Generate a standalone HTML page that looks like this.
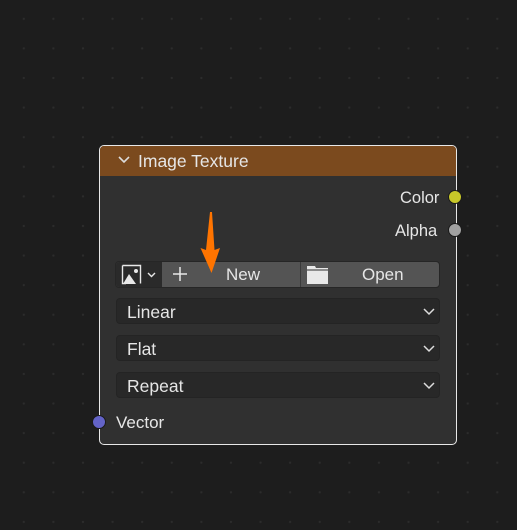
<!DOCTYPE html>
<html><head><style>
body{margin:0;width:517px;height:530px;overflow:hidden;background-color:#1d1d1d;
background-image:radial-gradient(circle,#2c2c2c 1px,transparent 1.3px);background-size:29.6px 29.6px;background-position:9px 4px;
font-family:"Liberation Sans","DejaVu Sans",sans-serif;color:#e6e6e6;font-size:16px;position:relative}
.node{position:absolute;left:99px;top:145px;width:356px;height:298px;border:1px solid #e8e8e8;border-radius:5px;background:#303030;overflow:hidden}
.hdr{height:30px;background:#7b4a1e;position:relative}
.hdr span{position:absolute;left:38px;top:5px;font-size:17.5px}
.abs{position:absolute}
.sock{position:absolute;width:12px;height:12px;border-radius:50%;border:1px solid #1a1a1a}
.dd{position:absolute;left:116px;width:324px;height:26px;background:#282828;border:1px solid #242424;border-radius:4px;box-sizing:border-box}
.dd span{position:absolute;left:10px;top:3px;font-size:17.5px}
.dd svg{position:absolute;right:4px;top:9px}
</style></head><body>
<div class="node"><div class="hdr">
<svg class="abs" style="left:17px;top:9px" width="14" height="10"><path d="M2 2 L7 7 L12 2" stroke="#ddd" stroke-width="1.6" fill="none"/></svg>
<span>Image Texture</span></div></div>
<div class="abs" style="left:400px;top:189px;font-size:16.5px">Color</div>
<div class="abs" style="left:395px;top:222px;font-size:16.5px">Alpha</div>
<div class="sock" style="left:448px;top:190px;background:#c7c729"></div>
<div class="sock" style="left:448px;top:223px;background:#a1a1a1"></div>
<div class="sock" style="left:92px;top:415px;background:#6363c7"></div>
<div class="abs" style="left:116px;top:413px;font-size:17px">Vector</div>
<!-- button row -->
<div class="abs" style="left:115px;top:261px;width:325px;height:27px;border-radius:4px;background:#545454;overflow:hidden;border:1px solid #262626;box-sizing:border-box">
 <div class="abs" style="left:0;top:0;width:46px;height:27px;background:#2a2a2a"></div>
 <div class="abs" style="left:184px;top:0;width:1px;height:27px;background:#3a3a3a"></div>
</div>
<svg class="abs" style="left:121px;top:264px" width="40" height="22">
 <path d="M1.5 1.5 H19.5 V19.5" stroke="#e8e8e8" stroke-width="1.4" fill="none"/><path d="M1.5 1.5 V19.5 H5" stroke="#e8e8e8" stroke-width="1.4" fill="none"/>
 <path d="M2 20 L8 10 L15 20 Z" fill="#e8e8e8"/><circle cx="15" cy="7" r="2" fill="#e8e8e8"/>
 <path d="M27 9 L30.5 12.5 L34 9" stroke="#e8e8e8" stroke-width="1.4" fill="none"/>
</svg>
<svg class="abs" style="left:172px;top:266px" width="16" height="16"><path d="M8 1 V15 M1 8 H15" stroke="#e8e8e8" stroke-width="1.5"/></svg>
<div class="abs" style="left:226px;top:265px;font-size:17px">New</div>
<svg class="abs" style="left:306px;top:265px" width="24" height="20"><path d="M1 1 H9 L10 3 H22 V19 H1 Z" fill="#e8e8e8"/><path d="M1 5 H22" stroke="#545454" stroke-width="1.2"/></svg>
<div class="abs" style="left:362px;top:265px;font-size:17px">Open</div>
<svg class="abs" style="left:198px;top:210px" width="26" height="66"><path d="M12 2 L14 2 L16.5 40 L22 38 L13.5 63 L2.5 38 L8 40 Z" fill="#ff7400"/></svg>
<div class="dd" style="top:298px"><span>Linear</span><svg width="12" height="8"><path d="M1 1 L6 6 L11 1" stroke="#ddd" stroke-width="1.5" fill="none"/></svg></div>
<div class="dd" style="top:335px"><span>Flat</span><svg width="12" height="8"><path d="M1 1 L6 6 L11 1" stroke="#ddd" stroke-width="1.5" fill="none"/></svg></div>
<div class="dd" style="top:372px"><span>Repeat</span><svg width="12" height="8"><path d="M1 1 L6 6 L11 1" stroke="#ddd" stroke-width="1.5" fill="none"/></svg></div>
</body></html>
